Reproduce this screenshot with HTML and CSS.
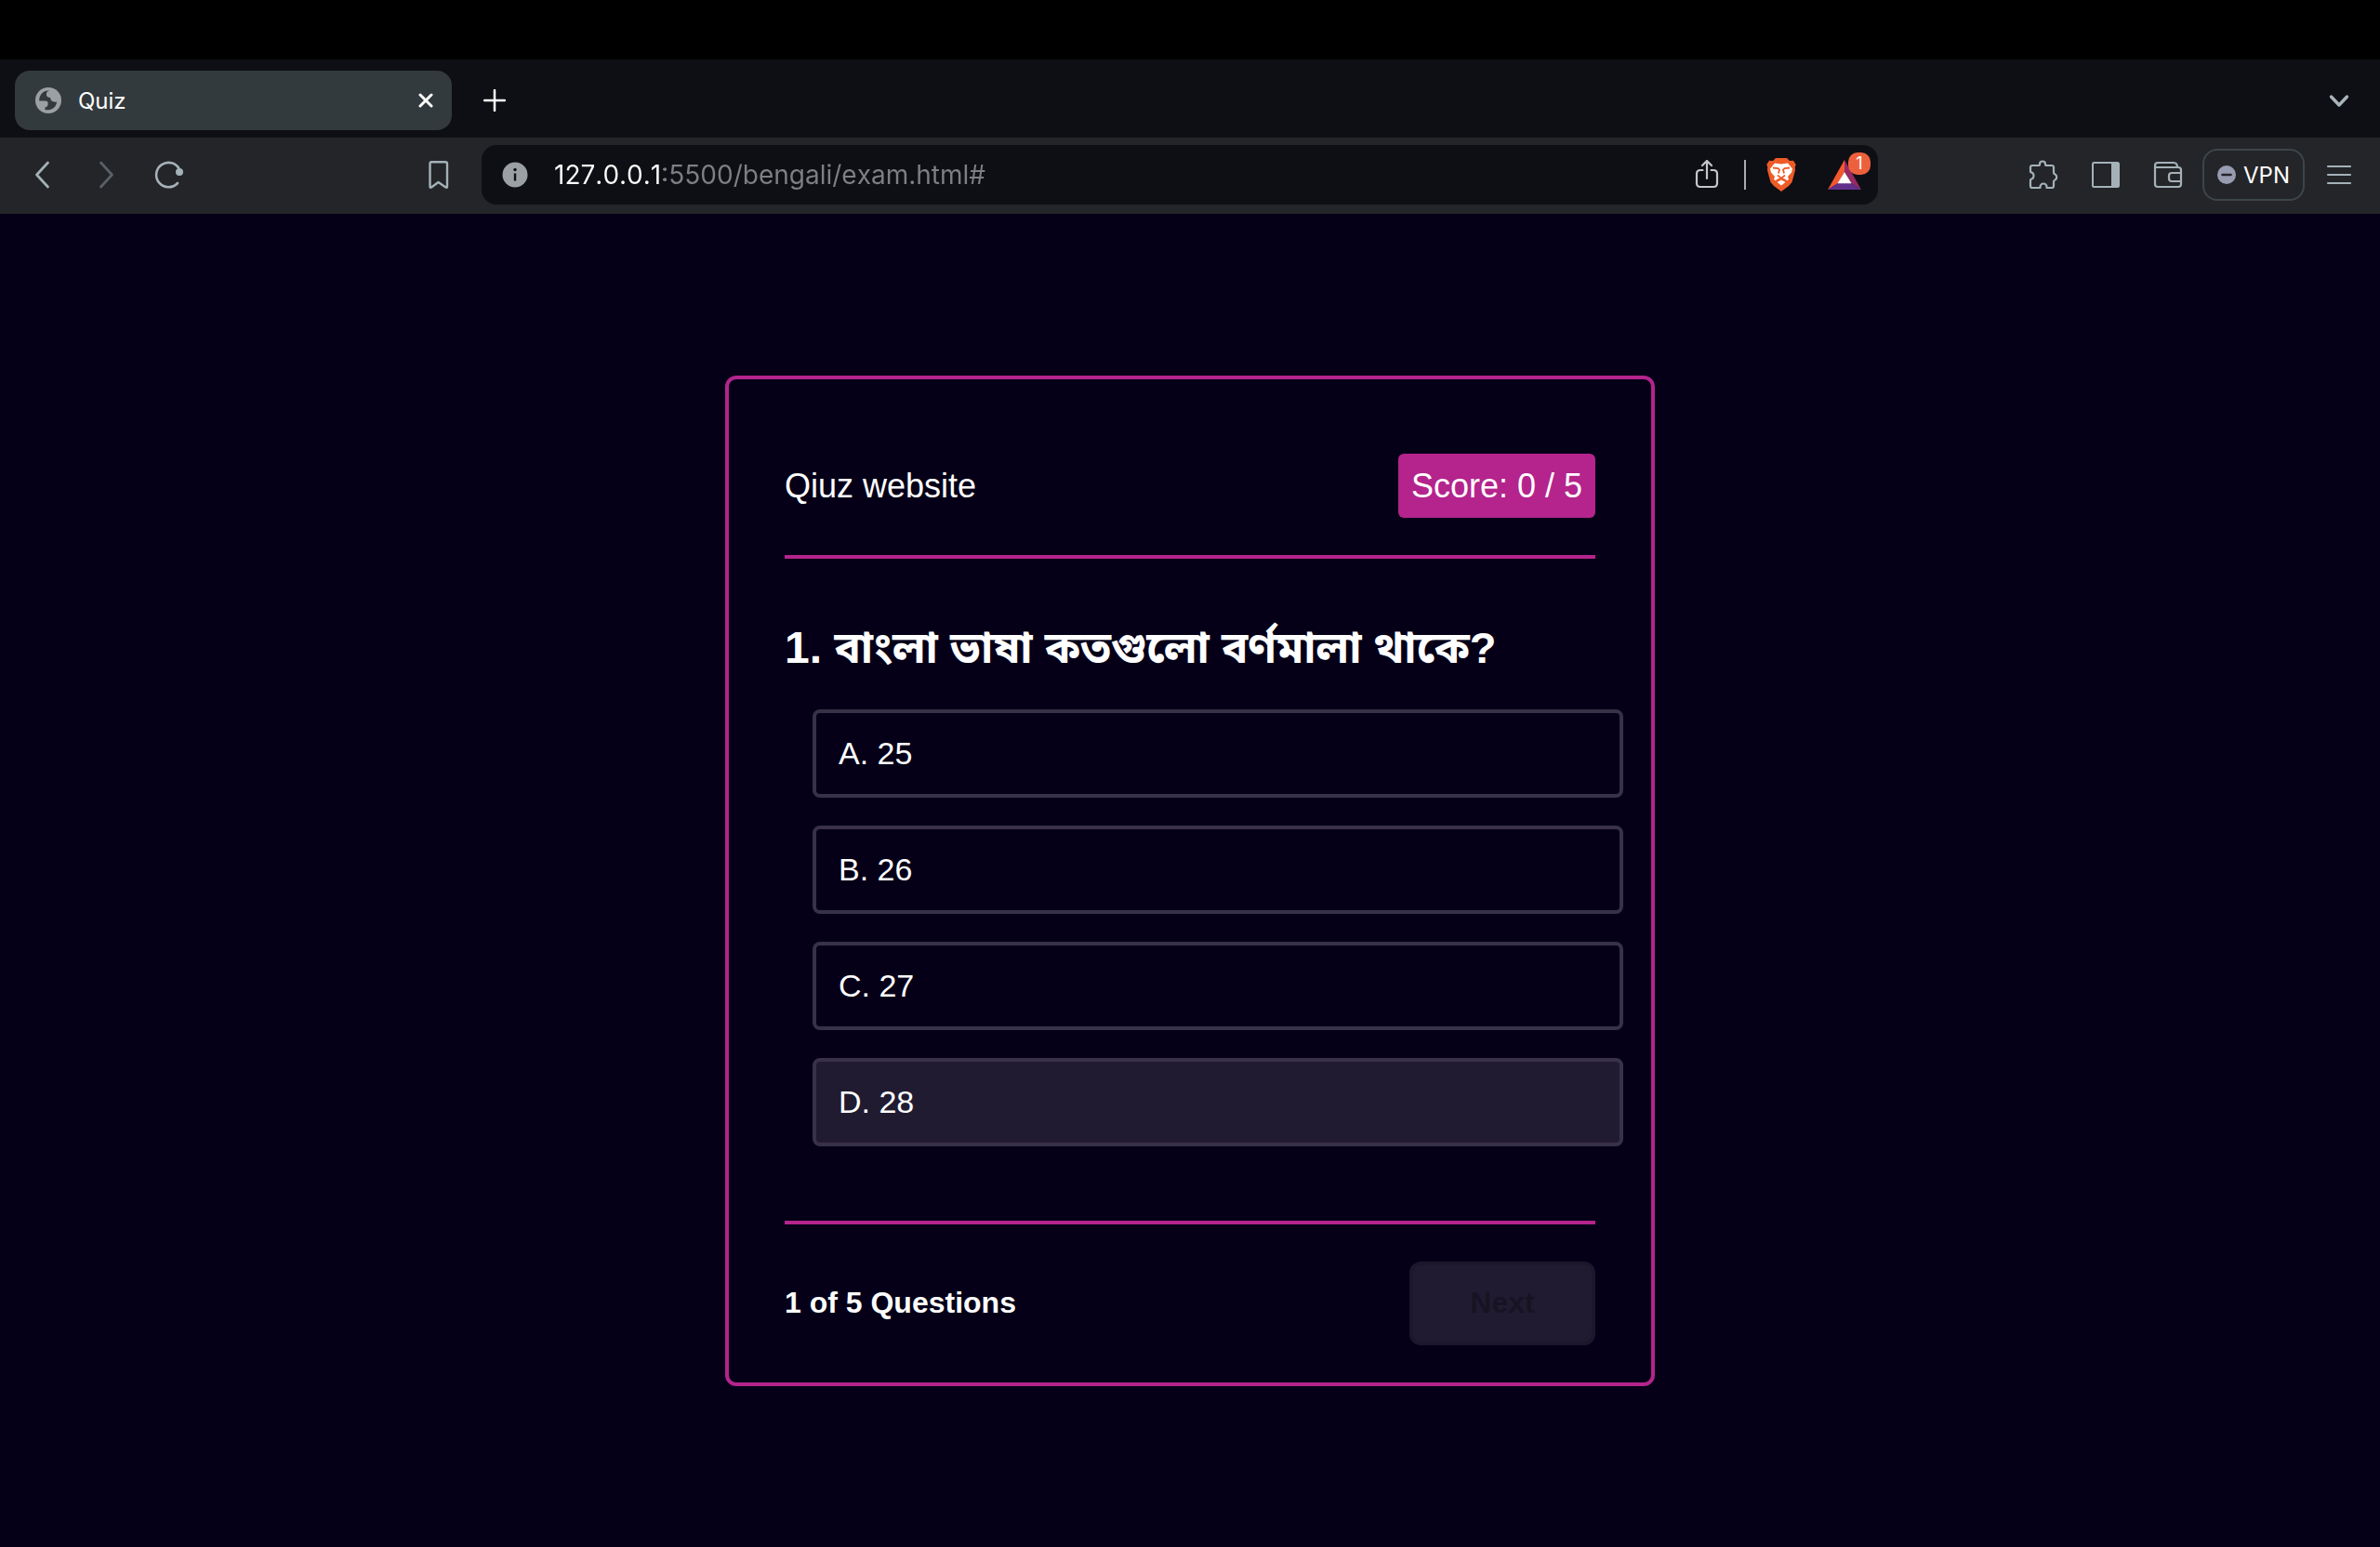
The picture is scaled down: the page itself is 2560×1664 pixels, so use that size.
FILE: index.html
```html
<!DOCTYPE html>
<html lang="en">
<head>
<meta charset="utf-8">
<title>Quiz</title>
<link rel="stylesheet" href="styles.css">
</head>
<body>
<div class="screen">
  <div class="menu-strip"></div>
  <header class="tab-strip">
    <div class="tab">
      <svg class="icon-28" viewBox="0 0 28 28" aria-hidden="true"><circle cx="14" cy="14" r="14" fill="#9aa0a3"/><path d="M16 3.5c-2.500 0-3 1-4 2.500v3c1 1 2 2 4 2l1 3c1.500 1.500 4 2 6 1.500 0 4-3.500 8.500-9 8.700h-3.500v-3c1.500 0 2.500-.5 3-2.500v-3c-1-1-2-1-4-1.200H4.200C4 8 8.500 3.500 14 3.500z" fill="#323a3d"/></svg>
      <span class="tab-title">Quiz</span>
      <button class="icon-button" aria-label="Close tab"><svg class="icon-16" viewBox="0 0 16 16"><path d="M2 2l12 12M14 2L2 14" fill="none" stroke="#fff" stroke-width="3" stroke-linecap="round"/></svg></button>
    </div>
    <button class="icon-button" aria-label="New tab"><svg class="icon-24" viewBox="0 0 24 24"><path d="M12 1v22M1 12h22" fill="none" stroke="#fff" stroke-width="2.500" stroke-linecap="round"/></svg></button>
    <button class="icon-button tab-search" aria-label="Search tabs"><svg class="icon-24" viewBox="0 0 24 24"><path d="M3.500 8l8.500 9 8.500-9" fill="none" stroke="#a9b5ba" stroke-width="3.400" stroke-linecap="round" stroke-linejoin="round"/></svg></button>
  </header>

  <nav class="toolbar">
    <div class="nav-tools">
      <button class="icon-button" aria-label="Back"><svg class="icon-32" viewBox="0 0 32 32"><path d="M21.500 3L9.500 16l12 13" fill="none" stroke="#a4b2b8" stroke-width="2.700" stroke-linecap="round" stroke-linejoin="round"/></svg></button>
      <button class="icon-button" aria-label="Forward"><svg class="icon-32" viewBox="0 0 32 32"><path d="M10.500 3l12 13-12 13" fill="none" stroke="#596167" stroke-width="2.700" stroke-linecap="round" stroke-linejoin="round"/></svg></button>
      <button class="icon-button" aria-label="Reload"><svg class="icon-32" viewBox="0 0 32 32"><path d="M25 25A13.200 13.200 0 1 1 27 10" fill="none" stroke="#a4b2b8" stroke-width="2.600" stroke-linecap="round"/><circle cx="27" cy="13" r="4" fill="#a4b2b8"/></svg></button>
      <button class="icon-button bookmark" aria-label="Bookmark"><svg class="icon-32" viewBox="0 0 32 32"><path d="M8 2.200h15q2 0 2 2v24.500q0 1.500-1.500.8L15.500 24l-7.500 5.500q-1.500.7-1.500-.8V4.200q0-2 1.500-2z" fill="none" stroke="#a4b2b8" stroke-width="2.400" stroke-linejoin="round"/></svg></button>
    </div>
    <div class="address">
      <svg class="icon-28" viewBox="0 0 28 28" aria-hidden="true"><circle cx="14" cy="14" r="13.500" fill="#9aa0a3"/><circle cx="14" cy="8.500" r="1.700" fill="#0e0f14"/><path d="M14 12.500v8" stroke="#0e0f14" stroke-width="2.400"/></svg>
      <input class="url" type="text" aria-label="Address" value="127.0.0.1:5500/bengali/exam.html#">
      <button class="icon-button" aria-label="Share"><svg class="icon-32" viewBox="0 0 32 32"><path d="M11.500 11H9q-4 0-4 4v10q0 4 4 4h14q4 0 4-4V15q0-4-4-4h-2.500M16 20V1.500M11 6l5-5 5 5" fill="none" stroke="#c4c6c8" stroke-width="2.200" stroke-linecap="round" stroke-linejoin="round"/></svg></button>
      <span class="divider"></span>
      <button class="icon-button" aria-label="Brave Shields"><svg class="shield" viewBox="0 0 32 36"><path d="M10 0h12l3 3 4-.3 2.700 4.300-1 3 .3 3-3.500 13L24 30l-8 6-8-6-3.500-4L1 13l.3-3-1-3L3 2.700 7 3z" fill="#ef5b27"/><path d="M9 5.500l7 1 7-1 5 6-1 4-4 4.500 1 3-1.500 1.200-3.500-2.200-3-1.200-3 1.200-3.500 2.200L8 23l1-3-4-4.500-1-4z" fill="#fff"/><path d="M16 23.500l4.500 2.500L16 29.500 11.500 26z" fill="#fff"/><path d="M7 10.500l5.500.5 1.500 1.500-1 4M25 10.500l-5.500.5-1.500 1.500 1 4" fill="none" stroke="#ef5b27" stroke-width="1.800"/><path d="M12 18.500l4 3.200 4-3.200" fill="none" stroke="#ef5b27" stroke-width="1.700"/></svg></button>
      <button class="icon-button rewards" aria-label="Brave Rewards"><svg class="triangle" viewBox="0 0 36 32"><path d="M18 0L0 32l11-7 7-12z" fill="#f2582f"/><path d="M18 0l18 32-11-7-7-12z" fill="#952a65"/><path d="M0 32h36l-11-7H11z" fill="#62308c"/><path d="M18 13l-7.500 12.200h15z" fill="#fff"/></svg><span class="badge">1</span></button>
    </div>
    <div class="extras">
      <button class="icon-button" aria-label="Extensions"><svg class="icon-32" viewBox="0 0 32 32"><path d="M4 6h6.500q1.500 0 1.500-1.500a3 3 0 0 1 6 0Q18 6 19.500 6H25q2 0 2 2v5.500q0 1.500 1.500 2a3.500 3.500 0 0 1 0 6Q27 22 27 23.500V28q0 2-2 2h-5.500v-1a3.500 3.500 0 0 0-7 0v1H4q-2 0-2-2v-6q0-1.500 1.500-1.500a4 4 0 0 0 0-7Q2 13.500 2 12V8q0-2 2-2z" fill="none" stroke="#a4b2b8" stroke-width="2.200" stroke-linejoin="round"/></svg></button>
      <button class="icon-button" aria-label="Sidebar"><svg class="icon-32" viewBox="0 0 32 32"><rect x="2" y="3" width="28" height="26" rx="1.500" fill="none" stroke="#a4b2b8" stroke-width="2"/><path d="M22 3h8v26h-8z" fill="#a4b2b8"/></svg></button>
      <button class="icon-button" aria-label="Wallet"><svg class="icon-32" viewBox="0 0 32 32"><path d="M2 7v19q0 3 3 3h22q3 0 3-3V11q0-3-3-3H4Q2 8 2 6q0-3 3-3h17q4 0 4 5M30 14H20q-3 0-3 3v3q0 3 3 3h10" fill="none" stroke="#a4b2b8" stroke-width="2.200" stroke-linejoin="round"/></svg></button>
      <button class="vpn"><svg class="icon-20" viewBox="0 0 20 20" aria-hidden="true"><circle cx="10" cy="10" r="10" fill="#989cb0"/><path d="M5.500 10h9" stroke="#242529" stroke-width="2.600" stroke-linecap="round"/></svg>VPN</button>
      <button class="icon-button" aria-label="Menu"><svg class="icon-32" viewBox="0 0 32 32"><path d="M4 7h24M4 16h24M4 25h24" fill="none" stroke="#a4b2b8" stroke-width="2.200" stroke-linecap="round"/></svg></button>
    </div>
  </nav>

  <main class="page">
    <section class="quiz">
      <div class="quiz-header">
        <span>Qiuz website</span>
        <span class="score">Score: 0 / 5</span>
      </div>
      <h1 class="question">1. <span class="bengali" lang="bn">বাংলা ভাষা কতগুলো বর্ণমালা থাকে?</span></h1>
      <div class="options">
        <button class="option">A. 25</button>
        <button class="option">B. 26</button>
        <button class="option">C. 27</button>
        <button class="option option-active">D. 28</button>
      </div>
      <div class="quiz-footer">
        <span>1 of 5 Questions</span>
        <button class="next" disabled>Next</button>
      </div>
    </section>
  </main>
</div>
</body>
</html>
```

FILE: styles.css
```css
* { box-sizing: border-box; }

body {
  margin: 0;
  background: #050018;
  color: #fff;
  font-family: "Liberation Sans", "Noto Sans Bengali", "Noto Sans", sans-serif;
}

button {
  margin: 0;
  padding: 0;
  border: 0;
  background: none;
  color: inherit;
  font: inherit;
}

svg { display: block; flex: none; }

.icon-16 { width: 16px; height: 16px; }
.icon-20 { width: 20px; height: 20px; }
.icon-24 { width: 24px; height: 24px; }
.icon-28 { width: 28px; height: 28px; }
.icon-32 { width: 32px; height: 32px; }
.icon-button { flex: none; }

.screen {
  display: flex;
  flex-direction: column;
  min-height: 100vh;
}

.menu-strip { height: 64px; background: #000; }

/* Browser chrome */
.tab-strip {
  display: flex;
  align-items: center;
  gap: 34px;
  padding: 12px 32px 8px 16px;
  background: #0e0f14;
  font-family: Inter, sans-serif;
}

.tab {
  display: flex;
  align-items: center;
  gap: 18px;
  width: 470px;
  height: 64px;
  padding: 0 20px 0 22px;
  border-radius: 16px;
  background: #323a3d;
  font-size: 24px;
}

.tab-title { flex: 1; }
.tab-search { margin-left: auto; }

.toolbar {
  display: grid;
  grid-template-columns: 488px minmax(0, 1fr) 350px;
  align-items: center;
  padding: 8px 28px 10px 30px;
  background: #242529;
  font-family: Inter, sans-serif;
}

.nav-tools,
.extras {
  display: flex;
  align-items: center;
  gap: 36px;
}

.nav-tools { padding-right: 30px; }
.bookmark { margin-left: auto; }

.address {
  display: flex;
  align-items: center;
  height: 64px;
  margin-right: 162px;
  padding: 0 18px 0 22px;
  border-radius: 16px;
  background: #0e0f14;
}

.url {
  flex: 1;
  min-width: 0;
  margin-left: 28px;
  padding: 0;
  border: 0;
  outline: 0;
  background: linear-gradient(90deg, #fff 118px, #7e7f83 118px);
  background-clip: text;
  color: transparent;
  font: 28px/40px Inter, sans-serif;
  font-kerning: none;
}

.divider {
  width: 2px;
  height: 32px;
  margin: 0 22px 0 24px;
  background: #a9abae;
}

.shield { width: 32px; height: 36px; }
.triangle { width: 36px; height: 32px; }
.rewards { position: relative; margin-left: 34px; }

.badge {
  position: absolute;
  top: -8px;
  right: -10px;
  width: 24px;
  height: 24px;
  border-radius: 10px;
  background: #ec603c;
  font-size: 18px;
  line-height: 24px;
  text-align: center;
}

.extras { justify-content: space-between; gap: 0; }

.vpn {
  display: flex;
  align-items: center;
  justify-content: center;
  gap: 8px;
  width: 110px;
  height: 56px;
  margin: 0 -14px;
  border: 2px solid #3d464a;
  border-radius: 16px;
  font-size: 24px;
}

/* Quiz page */
.page {
  display: flex;
  flex: 1;
  align-items: center;
  justify-content: center;
}

.quiz {
  width: 1000px;
  max-width: 100%;
  padding: 80px 60px 40px;
  border: 4px solid #b4248c;
  border-radius: 12px;
}

.quiz-header,
.quiz-footer {
  display: flex;
  align-items: center;
  justify-content: space-between;
}

.quiz-header {
  padding-bottom: 40px;
  border-bottom: 4px solid #b4248c;
  font-size: 36px;
  line-height: 41px;
}

.score {
  padding: 14px;
  border-radius: 6px;
  background: #b4248c;
}

.question {
  margin: 0;
  padding: 60px 0 30px;
  font-size: 48px;
  line-height: 72px;
}

.bengali { font-size: 47px; }

.options {
  display: grid;
  gap: 30px;
  margin: 0 -30px 80px 30px;
}

.option {
  padding: 24px;
  border: 4px solid #393148;
  border-radius: 8px;
  font-size: 34px;
  line-height: 39px;
  text-align: left;
}

.option-active { background: #211b31; }

.quiz-footer {
  padding-top: 40px;
  border-top: 4px solid #b4248c;
  font-size: 32px;
  font-weight: 700;
}

.next {
  width: 200px;
  height: 90px;
  border: 4px solid #1d172b;
  border-radius: 12px;
  background: #211b31;
  color: #181323;
}
```
